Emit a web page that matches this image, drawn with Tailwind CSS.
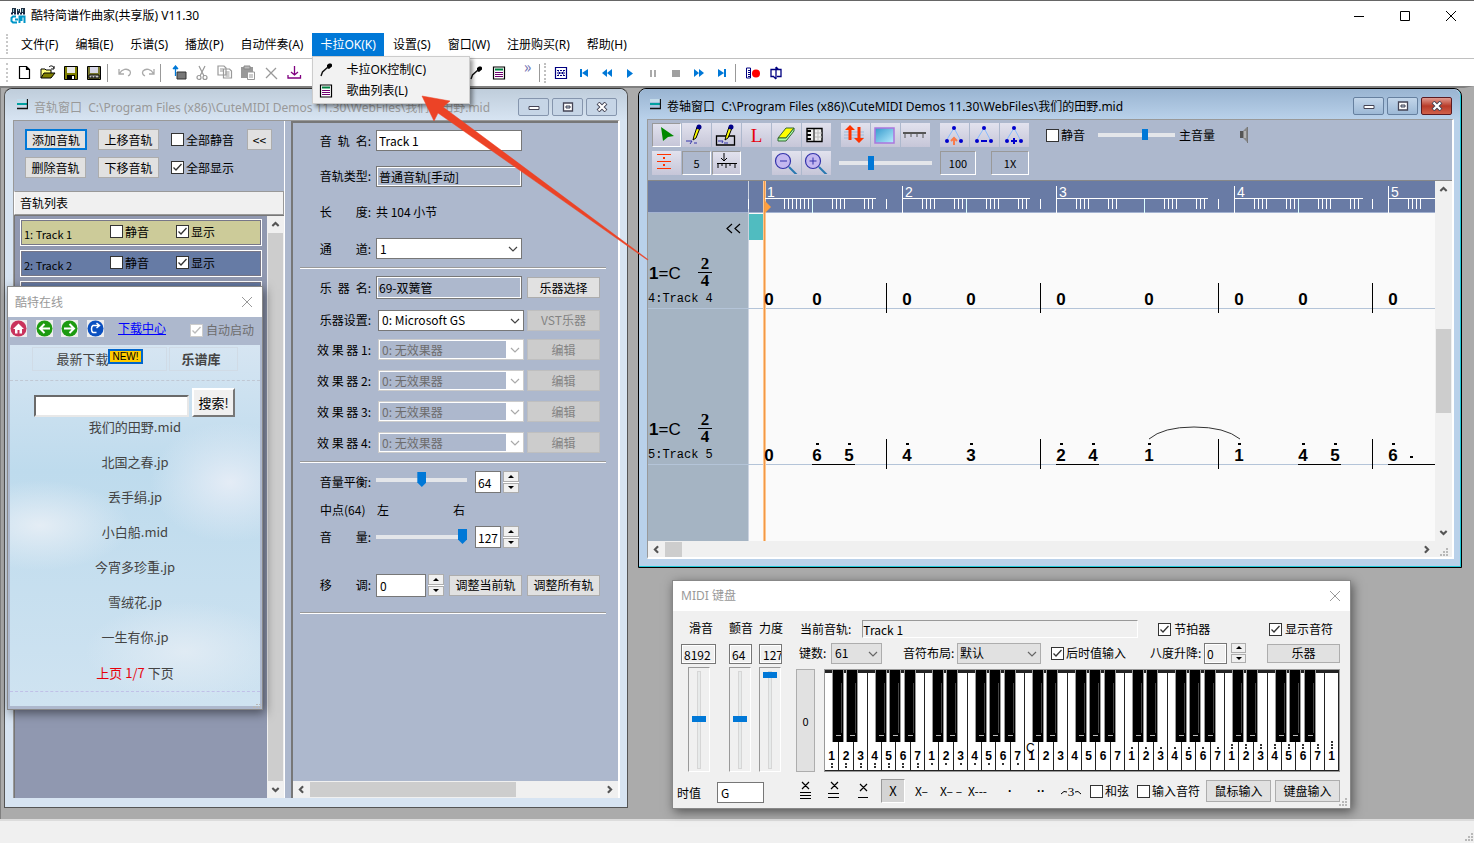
<!DOCTYPE html>
<html lang="zh-CN">
<head>
  <meta charset="UTF-8" />
  <title>酷特简谱作曲家(共享版) V11.30</title>
  <script src="https://cdn.jsdelivr.net/npm/@tailwindcss/browser@4"></script>
</head>
<body class="relative h-screen overflow-hidden flex flex-col bg-[#f0f0f0] text-black text-[12px] leading-4 font-['Noto_Sans_CJK_SC',sans-serif] select-none">

  <!-- Shared shapes -->
  <svg class="hidden">
    <symbol id="check" viewBox="0 0 13 13"><path d="M2.5 6.5 5 9l5.5-6" fill="none" stroke="currentColor" stroke-width="1.3" /></symbol>
    <symbol id="down" viewBox="0 0 10 10"><path d="m1 3 4 4 4-4" fill="none" stroke="currentColor" stroke-width="1.2" /></symbol>
    <symbol id="spin" viewBox="0 0 6 3"><path d="M0 3 3 0l3 3z" /></symbol>
    <symbol id="close" viewBox="0 0 12 12"><path d="m1 1 10 10M11 1 1 11" fill="none" stroke="currentColor" /></symbol>
    <symbol id="arrow" viewBox="0 0 8 8"><path d="m1 5.500 3-3 3 3" fill="none" stroke="#555" stroke-width="2" /></symbol>
    <symbol id="grip" viewBox="0 0 9 9"><path d="M6 0h2v2H6zM3 3h2v2H3zM6 3h2v2H6zM0 6h2v2H0zM3 6h2v2H3zM6 6h2v2H6z" fill="#b8b8b8" /></symbol>
    <symbol id="doc" viewBox="0 0 11 11"><path d="M0 0h10v3H0z" fill="#c4dcea" /><path d="M0 4h10v2H0z" fill="#00a0a0" /><path d="M0 9.500h10.500V0" fill="none" stroke="#111" stroke-width="1.3" /></symbol>
    <symbol id="mic" viewBox="0 0 14 14"><path d="M8 2 10 .5h2l1 1v2L10 6 8 5z" /><path d="M9 4 3.500 9 2 13" fill="none" stroke="#111" stroke-width="1.4" /></symbol>
    <symbol id="songs" viewBox="0 0 14 14"><path d="M1.500 1h11v12h-11z" fill="#fff" stroke="#000" stroke-width="1.2" /><path d="M3 2.500h8v2H3z" fill="#008040" /><path d="M3 6.500h8M3 8.500h8M3 10.500h8" stroke="#700070" /></symbol>
    <symbol id="min" viewBox="0 0 12 8"><path d="M1 3.500h10v3H1z" fill="#fff" stroke="#445" /></symbol>
    <symbol id="max" viewBox="0 0 12 10"><path d="M1.500 1h9v8h-9z" fill="#fff" stroke="#445" stroke-width="1.3" /><path d="M4 4h4v2H4z" fill="#bcd" stroke="#445" /></symbol>
    <symbol id="x" viewBox="0 0 12 10"><path d="m2 1 8 8M10 1 2 9" stroke="#445" stroke-width="4" /><path d="m2.500 1.500 7 7M9.500 1.500l-7 7" stroke="#fff" stroke-width="2.200" /></symbol>
  </svg>

  <!-- Title bar -->
  <header class="h-[30px] shrink-0 flex items-center bg-white border-t border-[#666] pl-[10px]">
    <svg class="w-4 h-4" viewBox="0 0 16 16"><path d="M2 0h4v5H2zM7 1h3v4H7zM11 0h4v5h-4z" fill="#234" /><path d="M3 1h1v3H3zM8 1h1v2H8zM12 1h1v3h-1z" fill="#9cd" /><path d="M1 5.500h14" stroke="#124" stroke-width="2" stroke-dasharray="2 1" /><path d="M6 8.500H3L1.500 10v3L3 14.500h4M5 11.500h3M9.500 15V8.500h2V13M12 8.500h2.500V15" fill="none" stroke="#0096c8" stroke-width="2" /></svg>
    <h1 class="ml-[5px] flex-1 font-['Noto_Sans','Noto_Sans_CJK_SC',sans-serif]">酷特简谱作曲家(共享版) V11.30</h1>
    <button aria-label="最小化" class="w-[46px] h-full grid place-items-center"><svg class="w-[10px] h-[10px]" viewBox="0 0 10 10"><path d="M0 5.500h10" stroke="#000" /></svg></button>
    <button aria-label="最大化" class="w-[46px] h-full grid place-items-center"><svg class="w-[10px] h-[10px]" viewBox="0 0 10 10"><path d="M.5.5h9v9h-9z" fill="none" stroke="#000" /></svg></button>
    <button aria-label="关闭" class="w-[46px] h-full grid place-items-center"><svg class="w-3 h-3"><use href="#close" /></svg></button>
  </header>

  <!-- Menu bar -->
  <nav class="relative h-[29px] shrink-0 flex gap-px items-center bg-white border-b border-[#c0c0c0] pt-[2px] pl-[13px] font-['Noto_Sans','Noto_Sans_CJK_SC',sans-serif] before:absolute before:left-[6px] before:inset-y-1 before:border-l-2 before:border-dotted before:border-[#c8c8c8]">
    <button class="h-6 px-2">文件(F)</button>
    <button class="h-6 px-2">编辑(E)</button>
    <button class="h-6 px-2">乐谱(S)</button>
    <button class="h-6 px-2">播放(P)</button>
    <button class="h-6 px-2">自动伴奏(A)</button>
    <div class="relative">
      <button class="h-6 px-2 bg-[#0078d7] text-white">卡拉OK(K)</button>
      <div class="absolute z-50 left-0 top-[23px] w-[158px] bg-[#f2f2f2] border border-[#ccc] shadow-[3px_3px_4px_rgba(0,0,0,0.4)] py-[2px]">
        <button class="w-full h-[21px] flex items-center gap-[13px] pl-[6px]"><svg class="w-[14px] h-[14px]"><use href="#mic" /></svg>卡拉OK控制(C)</button>
        <button class="w-full h-[21px] flex items-center gap-[13px] pl-[6px]"><svg class="w-[14px] h-[14px]"><use href="#songs" /></svg>歌曲列表(L)</button>
      </div>
    </div>
    <button class="h-6 px-2">设置(S)</button>
    <button class="h-6 px-2">窗口(W)</button>
    <button class="h-6 px-2">注册购买(R)</button>
    <button class="h-6 px-2">帮助(H)</button>
  </nav>

  <!-- Toolbar -->
  <div class="relative h-[27px] shrink-0 flex items-center bg-white pl-[13px] before:absolute before:left-[6px] before:inset-y-1 before:border-l-2 before:border-dotted before:border-[#c8c8c8] [&>button]:w-[23px] [&>button]:h-[22px] [&>button]:grid [&>button]:place-items-center [&>button]:shrink-0 [&>i]:w-px [&>i]:h-[18px] [&>i]:bg-[#999] [&>i]:shrink-0 [&_svg]:w-4 [&_svg]:h-4">
    <button aria-label="新建"><svg viewBox="0 0 16 16"><path d="M2.500 1.500h7l3 3v9h-10zM9.500 1.500v3h3" fill="#fff" stroke="#000" stroke-width="1.2" /></svg></button>
    <button aria-label="打开"><svg viewBox="0 0 16 16"><path d="M1 13V4h4l1 1h5v3" fill="#ffff80" stroke="#000" /><path d="m1 13 3-5h11l-4 5z" fill="#808000" stroke="#000" /><path d="M9 2c2-2 4-1 5 1m0-2v3h-3" fill="none" stroke="#000" /></svg></button>
    <button aria-label="保存"><svg viewBox="0 0 16 16"><path d="M1.500 1.500h13v13h-13z" fill="#808000" stroke="#000" /><path d="M4 2h8v6H4z" fill="#e8e8e8" /><path d="M4 10h8v4.500H4z" /><path d="M9 11h2v3H9z" fill="#fff" /></svg></button>
    <button aria-label="另存为"><svg viewBox="0 0 16 16"><path d="M1.500 1.500h13v13h-13z" fill="#777730" stroke="#000" /><path d="M4 2h8v6H4z" fill="#d8d8e8" /><path d="M3 10h10v3H3z" fill="#ccc" stroke="#000" /><path d="M5 12h2m1 0h2" stroke="#000" /></svg></button>
    <i class="mx-[2px]"></i><span class="w-[3px]"></span>
    <button aria-label="撤销"><svg viewBox="0 0 16 16"><path d="M2 4v5h5M2.500 8.500C5 4 10 3 13 6c1 2 0 4-2 5" fill="none" stroke="#aaa" stroke-width="1.3" /></svg></button>
    <button aria-label="重做"><svg viewBox="0 0 16 16"><path d="M14 4v5H9M13.500 8.500C11 4 6 3 3 6c-1 2 0 4 2 5" fill="none" stroke="#aaa" stroke-width="1.3" /></svg></button>
    <i class="mx-[1px]"></i><span class="w-[5px]"></span>
    <button aria-label="插入"><svg viewBox="0 0 16 16"><path d="M6 7h9v7H6z" fill="#777" stroke="#333" /><path d="M4.500 1v10M2 4l2.500-3L7 4M2 3.500h5" fill="none" stroke="#0078d7" stroke-width="1.3" /></svg></button>
    <button aria-label="剪切"><svg viewBox="0 0 16 16" fill="none" stroke="#999" stroke-width="1.2"><path d="m5 1 5 10M11 1 6 11" /><circle cx="5" cy="12.500" r="2" /><circle cx="11" cy="12.500" r="2" /></svg></button>
    <button aria-label="复制"><svg viewBox="0 0 16 16" fill="#fff" stroke="#999" stroke-width="1.2"><path d="M1 1h6l2 2v7H1zM6.500 4h6l2 2v7h-8z" /><path d="M3 4h3M3 6h3M8.500 7h4m-4 2h4m-4 2h4" /></svg></button>
    <button aria-label="粘贴"><svg viewBox="0 0 16 16"><path d="M1 2h12v11H1z" fill="#999" /><path d="M4 1h6v3H4z" fill="#bbb" stroke="#888" /><path d="M7.500 7h7v7.500h-7z" fill="#fff" stroke="#999" /><path d="M9 10h4m-4 2h4" stroke="#999" /></svg></button>
    <button aria-label="删除"><svg viewBox="0 0 16 16"><path d="m3 3 11 11M13 3 3 13" stroke="#999" stroke-width="1.300" /></svg></button>
    <button aria-label="导入"><svg viewBox="0 0 16 16"><path d="M8.500 1v9M5 7l3.500 3L12 7M2 10v3h12.500v-3" fill="none" stroke="#800080" stroke-width="1.300" /></svg></button>
    <span class="w-[159px] shrink-0"></span>
    <button aria-label="卡拉OK控制"><svg viewBox="0 0 16 16"><use href="#mic" x="1" y="1" width="14" height="14" /></svg></button>
    <button aria-label="歌曲列表"><svg viewBox="0 0 16 16"><use href="#songs" x="1" y="1" width="14" height="14" /></svg></button>
    <button aria-label="更多" class="self-start -mt-1 text-[#7070b0] text-[16px] ml-[6px]">»</button>
    <i></i>
    <span class="ml-1 mr-[3px] h-[20px] border-l-2 border-dotted border-[#c0c0c0]"></span>
    <button aria-label="卷轴"><svg viewBox="0 0 16 16"><path d="M2.500 2.500h11v11h-11z" fill="none" stroke="#000080" stroke-width="1.200" /><path d="M4 5.500h2m1 0h2m1 0h2M4 10.500h2m1 0h2m1 0h2M4 8h8M5.500 6.500 7 8 5.500 9.500m5-3L9 8l1.500 1.500" fill="none" stroke="#000080" /></svg></button>
    <button aria-label="到开头"><svg viewBox="0 0 16 16" fill="#0078d7"><path d="M4 4h2v8H4zM12 4v8L6 8z" /></svg></button>
    <button aria-label="快退"><svg viewBox="0 0 16 16" fill="#0078d7"><path d="M8 4v8L3 8zM13 4v8L8 8z" /></svg></button>
    <button aria-label="播放"><svg viewBox="0 0 16 16" fill="#0078d7"><path d="M5 4v9l6-4.500z" /></svg></button>
    <button aria-label="暂停"><svg viewBox="0 0 16 16" fill="#aaa"><path d="M5 5h2v7H5zM9 5h2v7H9z" /></svg></button>
    <button aria-label="停止"><svg viewBox="0 0 16 16" fill="#a0a0a0"><path d="M4 5h8v7H4z" /></svg></button>
    <button aria-label="快进"><svg viewBox="0 0 16 16" fill="#0078d7"><path d="M3 4v8l5-4zM8 4v8l5-4z" /></svg></button>
    <button aria-label="到结尾"><svg viewBox="0 0 16 16" fill="#0078d7"><path d="M10 4h2v8h-2zM4 4v8l6-4z" /></svg></button>
    <i class="mx-[2px]"></i><span class="w-[3px]"></span>
    <button aria-label="录音"><svg viewBox="0 0 16 16"><path d="M1.500 3h4v10h-4zM3 5.500h2m-2 2h2m-2 2h2m-2 2h2" fill="none" stroke="#000080" /><circle cx="11" cy="8.500" r="4" fill="red" /></svg></button>
    <button aria-label="循环"><svg viewBox="0 0 16 16"><path d="M6 11.500H3V4.500h10v7H9M8 2v12M8 2l2.500 2.500M8 14l-2.500-2.500" fill="none" stroke="#000080" stroke-width="1.300" /></svg></button>
  </div>

  <!-- Desktop -->
  <main class="relative flex-1 bg-[#ababab] border-t-2 border-[#808080] border-l border-r-[10px] border-r-[#ababab]">

    <!-- Track window -->
    <section class="absolute left-[3px] top-0 bottom-[11px] w-[624px] flex flex-col rounded-t-lg border border-[#555] border-t-[#333] bg-[#d7e4f2] pb-[9px] pl-[8px] pr-[7px]">
      <div class="h-[31px] -ml-[8px] -mr-[7px] pl-[9px] pr-[10px] shrink-0 flex items-center gap-[6px] rounded-t-lg bg-linear-to-b from-[#bfcddb] to-[#d7e4f2] text-[#999] font-['Noto_Sans','Noto_Sans_CJK_SC',sans-serif]">
        <svg class="ml-[3px] w-[11px] h-[11px]"><use href="#doc" /></svg>
        <h2 class="flex-1 pt-[6px] whitespace-pre">音轨窗口  C:\Program Files (x86)\CuteMIDI Demos 11.30\WebFiles\我们的田野.mid</h2>
        <div class="flex gap-[3px] pt-1">
          <button aria-label="最小化" class="w-[31px] h-[18px] grid place-items-center rounded-xs border border-[#8595ad] bg-[#c6d5e6]"><svg class="w-3 h-2"><use href="#min" /></svg></button>
          <button aria-label="最大化" class="w-[31px] h-[18px] grid place-items-center rounded-xs border border-[#8595ad] bg-[#c6d5e6]"><svg class="w-3 h-[10px]"><use href="#max" /></svg></button>
          <button aria-label="关闭" class="w-[31px] h-[18px] grid place-items-center rounded-xs border border-[#8595ad] bg-[#c6d5e6]"><svg class="w-3 h-[10px]"><use href="#x" /></svg></button>
        </div>
      </div>

      <div class="flex-1 min-h-0 flex bg-[#adb8cd] border-t border-l border-[#999] border-r-2 border-r-white">
        <!-- Track list -->
        <div class="w-[271px] mr-[6px] flex flex-col border-r border-white">
          <div class="h-[70px] shrink-0 pt-[8px] pl-[11px] grid grid-cols-[73px_73px_76px_25px] grid-rows-[21px_21px] gap-y-[7px]">
            <button class="w-[62px] bg-[#e1e1e1] border-2 border-[#0078d7]">添加音轨</button>
            <button class="w-[61px] bg-[#e1e1e1] border border-[#adadad]">上移音轨</button>
            <label class="flex items-center gap-[2px] whitespace-nowrap"><span class="relative w-[13px] h-[13px]"><input type="checkbox" class="peer block appearance-none w-[13px] h-[13px] border border-[#333] bg-white"><svg class="absolute inset-0 hidden peer-checked:block w-[13px] h-[13px] text-[#333]"><use href="#check" /></svg></span>全部静音</label>
            <button class="bg-[#e1e1e1] border border-[#adadad]">&lt;&lt;</button>
            <button class="w-[61px] bg-[#e1e1e1] border border-[#adadad]">删除音轨</button>
            <button class="w-[61px] bg-[#e1e1e1] border border-[#adadad]">下移音轨</button>
            <label class="flex items-center gap-[2px] whitespace-nowrap"><span class="relative w-[13px] h-[13px]"><input type="checkbox" checked class="peer block appearance-none w-[13px] h-[13px] border border-[#333] bg-white"><svg class="absolute inset-0 hidden peer-checked:block w-[13px] h-[13px] text-[#333]"><use href="#check" /></svg></span>全部显示</label>
          </div>
          <h3 class="h-[24px] shrink-0 pl-[5px] flex items-center bg-[#f0f0f0] border border-[#999] border-l-white">音轨列表</h3>
          <div class="flex-1 min-h-0 flex bg-[#9098b0] border-l border-t border-[#777]">
            <div id="tracks" class="flex-1 px-[5px] pt-[3px] flex flex-col gap-[4px] overflow-hidden"></div>
            <div class="w-[17px] flex flex-col items-center justify-between bg-[#cdcdcd] border-x border-x-[#f0f0f0]">
              <svg class="w-[15px] h-[17px] bg-[#f0f0f0]" viewBox="-3 -4 14 16"><use href="#arrow" width="8" height="8" /></svg>
              <svg class="w-[15px] h-[17px] bg-[#f0f0f0] rotate-180" viewBox="-3 -4 14 16"><use href="#arrow" width="8" height="8" /></svg>
            </div>
          </div>
        </div>

        <!-- Track properties -->
        <div class="flex-1 flex flex-col border-l-2 border-t-2 border-[#777]">
          <form class="flex-1 pl-[7px] pr-[12px] [&_label]:w-[56px] [&_label]:shrink-0 [&_label]:ml-[15px] [&_label]:mr-[5px] [&_label]:text-right [&_label]:whitespace-pre">
            <div class="h-[35px] flex items-center"><label for="tname">音&ensp;轨&ensp;名:</label><input id="tname" value="Track 1" class="w-[146px] h-[21px] px-[2px] bg-white border border-[#777]"></div>
            <div class="h-[36px] flex items-center"><label for="ttype">音轨类型:</label><input id="ttype" readonly value="普通音轨[手动]" class="w-[146px] h-[21px] px-[2px] border border-[#777] shadow-[inset_0_0_0_1px_#fff]"></div>
            <div class="h-[36px] flex items-center"><label for="tlen">长&emsp;&emsp;度:</label><output id="tlen">共 104 小节</output></div>
            <div class="h-[37px] flex items-center"><label for="tch">通&emsp;&emsp;道:</label>
              <span class="relative"><select id="tch" class="block appearance-none w-[146px] h-[21px] px-[3px] bg-white border border-[#777]"><option>1</option></select><svg class="absolute right-1 top-[6px] w-[10px] h-[10px] text-[#444]"><use href="#down" /></svg></span></div>
            <hr class="border-t border-b border-t-[#999] border-b-white">
            <div class="h-[37px] flex items-center"><label for="inst">乐&ensp;器&ensp;名:</label><input id="inst" readonly value="69-双簧管" class="w-[146px] h-[23px] px-[2px] border border-[#777] shadow-[inset_0_0_0_1px_#fff]"><button type="button" class="ml-[5px] w-[73px] h-[21px] bg-[#e1e1e1] border border-[#adadad]">乐器选择</button></div>
            <div class="h-[28px] flex items-center"><label for="dev">乐器设置:</label>
              <span class="relative ml-[2px]"><select id="dev" class="block appearance-none w-[146px] h-[21px] px-[3px] bg-white border border-[#777]"><option>0: Microsoft GS</option></select><svg class="absolute right-1 top-[6px] w-[10px] h-[10px] text-[#444]"><use href="#down" /></svg></span><button type="button" disabled class="ml-[3px] w-[73px] h-[21px] bg-[#ccc] border border-[#bfbfbf] text-[#838383]">VST乐器</button></div>
            <div id="effects"></div>
            <hr class="mt-[3px] border-t border-b border-t-[#999] border-b-white">
            <div class="h-[38px] flex items-center"><label for="pan">音量平衡:</label>
              <input id="pan" type="range" min="0" max="127" value="64" class="appearance-none w-[91px] h-4 mb-1 bg-transparent [&::-webkit-slider-runnable-track]:h-[4px] [&::-webkit-slider-runnable-track]:bg-[#e4e6ea] [&::-webkit-slider-thumb]:appearance-none [&::-webkit-slider-thumb]:w-[9px] [&::-webkit-slider-thumb]:h-[15px] [&::-webkit-slider-thumb]:-mt-[6px] [&::-webkit-slider-thumb]:bg-[#0078d7] [&::-webkit-slider-thumb]:[clip-path:polygon(0_0,100%_0,100%_70%,50%_100%,0_70%)]">
              <input aria-label="音量平衡值" value="64" class="ml-[8px] w-[26px] h-[22px] px-[2px] bg-white border border-[#777]">
              <span class="ml-[2px] w-[16px] h-[22px] flex flex-col gap-px bg-white"><button type="button" aria-label="加" class="flex-1 grid place-items-center border border-[#adadad] bg-[#f0f0f0]"><svg class="w-[6px] h-[3px]"><use href="#spin" /></svg></button><button type="button" aria-label="减" class="flex-1 grid place-items-center border border-[#adadad] bg-[#f0f0f0]"><svg class="w-[6px] h-[3px] rotate-180"><use href="#spin" /></svg></button></span></div>
            <div class="h-[18px] flex items-center pl-[20px]"><span class="w-[57px]">中点(64)</span><span class="w-[76px]">左</span><span>右</span></div>
            <div class="h-[36px] flex items-center"><label for="vol">音&emsp;&emsp;量:</label>
              <input id="vol" type="range" min="0" max="127" value="127" class="appearance-none w-[91px] h-4 bg-transparent [&::-webkit-slider-runnable-track]:h-[4px] [&::-webkit-slider-runnable-track]:bg-[#e4e6ea] [&::-webkit-slider-thumb]:appearance-none [&::-webkit-slider-thumb]:w-[9px] [&::-webkit-slider-thumb]:h-[15px] [&::-webkit-slider-thumb]:-mt-[6px] [&::-webkit-slider-thumb]:bg-[#0078d7] [&::-webkit-slider-thumb]:[clip-path:polygon(0_0,100%_0,100%_70%,50%_100%,0_70%)]">
              <input aria-label="音量值" value="127" class="ml-[8px] w-[26px] h-[22px] px-[2px] bg-white border border-[#777]">
              <span class="ml-[2px] w-[16px] h-[22px] flex flex-col gap-px bg-white"><button type="button" aria-label="加" class="flex-1 grid place-items-center border border-[#adadad] bg-[#f0f0f0]"><svg class="w-[6px] h-[3px]"><use href="#spin" /></svg></button><button type="button" aria-label="减" class="flex-1 grid place-items-center border border-[#adadad] bg-[#f0f0f0]"><svg class="w-[6px] h-[3px] rotate-180"><use href="#spin" /></svg></button></span></div>
            <div class="mt-[11px] h-[38px] flex items-center"><label for="shift">移&emsp;&emsp;调:</label>
              <input id="shift" value="0" class="w-[50px] h-[23px] px-[3px] bg-white border border-[#777]">
              <span class="ml-[2px] w-[16px] h-[22px] flex flex-col gap-px bg-white"><button type="button" aria-label="加" class="flex-1 grid place-items-center border border-[#adadad] bg-[#f0f0f0]"><svg class="w-[6px] h-[3px]"><use href="#spin" /></svg></button><button type="button" aria-label="减" class="flex-1 grid place-items-center border border-[#adadad] bg-[#f0f0f0]"><svg class="w-[6px] h-[3px] rotate-180"><use href="#spin" /></svg></button></span>
              <button type="button" class="ml-[5px] w-[73px] h-[21px] bg-[#e1e1e1] border border-[#adadad]">调整当前轨</button>
              <button type="button" class="ml-[5px] w-[73px] h-[21px] bg-[#e1e1e1] border border-[#adadad]">调整所有轨</button></div>
            <hr class="mt-[8px] border-t border-b border-t-[#999] border-b-white">
          </form>
          <div class="h-[17px] flex items-center bg-[#f0f0f0]">
            <svg class="w-[17px] h-[17px] -rotate-90" viewBox="-4 -4 16 16"><use href="#arrow" width="8" height="8" /></svg>
            <div class="w-[206px] h-[15px] bg-[#cdcdcd]"></div>
            <svg class="ml-auto w-[17px] h-[17px] rotate-90" viewBox="-4 -4 16 16"><use href="#arrow" width="8" height="8" /></svg>
          </div>
        </div>
      </div>
    </section>

    <!-- Score window -->
    <section class="absolute left-[637px] right-[2px] top-0 h-[480px] flex flex-col rounded-t-lg border border-black shadow-[inset_-1px_-1px_0_#20c8d8] bg-[#b9d1ea] pb-[8px] pl-[8px] pr-[7px]">
      <div class="h-[30px] -ml-[8px] -mr-[6px] pl-[9px] pr-[8px] shrink-0 flex items-center gap-[6px] rounded-t-lg bg-linear-to-b from-[#99b4d1] to-[#b9d1ea] font-['Noto_Sans','Noto_Sans_CJK_SC',sans-serif]">
        <svg class="ml-[2px] w-[11px] h-[11px]"><use href="#doc" /></svg>
        <h2 class="flex-1 pt-[6px] whitespace-pre">卷轴窗口  C:\Program Files (x86)\CuteMIDI Demos 11.30\WebFiles\我们的田野.mid</h2>
        <div class="flex gap-[3px] pt-1">
          <button aria-label="最小化" class="w-[31px] h-[18px] grid place-items-center rounded-xs border border-[#66809f] bg-linear-to-b from-[#c3d6ea] to-[#9db9d6]"><svg class="w-3 h-2"><use href="#min" /></svg></button>
          <button aria-label="最大化" class="w-[31px] h-[18px] grid place-items-center rounded-xs border border-[#66809f] bg-linear-to-b from-[#c3d6ea] to-[#9db9d6]"><svg class="w-3 h-[10px]"><use href="#max" /></svg></button>
          <button aria-label="关闭" class="w-[31px] h-[18px] grid place-items-center rounded-xs border border-[#5b1a20] bg-linear-to-b from-[#e09a90] via-[#b83a28] to-[#d0604a]"><svg class="w-3 h-[10px]"><use href="#x" /></svg></button>
        </div>
      </div>

      <div class="flex-1 min-h-0 flex flex-col border border-[#999] border-r-2 border-b-2 border-r-white border-b-white bg-[#f0f0f0]">
        <!-- Tools -->
        <div class="h-[61px] shrink-0 pt-[3px] pl-[4px] flex flex-col gap-[4px] bg-[#adb8cd] border-b border-[#888] [&_svg]:w-[28px] [&_svg]:h-[22px] [&_svg]:shrink-0">
          <div class="h-[24px] flex items-center [&>button]:w-[29px] [&>button]:h-[24px] [&>button]:mr-px [&>button]:bg-linear-to-b [&>button]:from-[#e2e2ee] [&>button]:to-[#c6c6d8] [&>button]:shrink-0">
            <button aria-label="选择" class="border border-t-[#999] border-l-[#999] border-r-white border-b-white"><svg viewBox="0 0 28 22"><path d="m8 3 13 9-6 1-5 4z" fill="#080" /></svg></button>
            <button aria-label="铅笔"><svg viewBox="0 0 28 22"><path d="m15 3-3 9-1 4 3-2 4-10z" fill="#ff0" stroke="#000" /><circle cx="17" cy="3" r="2.500" fill="#008" /><path d="M4 17h6l-2 3M12 19h3" fill="none" stroke="#33a" /></svg></button>
            <button aria-label="框写"><svg viewBox="0 0 28 22"><path d="M4.500 12h18v9h-18z" fill="none" stroke="#000" stroke-width="1.300" /><path d="m17 3-3 9-1 4 3-2 4-10z" fill="#ff0" stroke="#000" /><circle cx="19" cy="3" r="2.500" fill="#008" /><path d="M6 17h5l-1 2M12 19h4" fill="none" stroke="#33a" /></svg></button>
            <button aria-label="歌词" class="text-[19px] leading-none text-red-600 font-['Liberation_Serif',serif]">L</button>
            <button aria-label="橡皮"><svg viewBox="0 0 28 22"><path d="m6 14 8-10h8l-8 10z" fill="#ff0" stroke="#363" /><path d="M6 14v3h8l8-10V4l-8 10z" fill="#afa" stroke="#363" /></svg></button>
            <button aria-label="键盘"><svg viewBox="0 0 28 22"><path d="M5 4.500h15v13H5z" fill="#eee" stroke="#000" stroke-width="1.400" /><path d="M12 4v14" stroke="#000" /><path d="M5 6h4v2H5zM5 10h4v2H5zM5 14h4v2H5z" /><path d="M13 9h7m-7 4h7M16 5v12" stroke="#bbb" /></svg></button>
            <span class="w-[9px]"></span>
            <button aria-label="力度"><svg viewBox="0 0 28 22"><path d="M3 8h20M3 11h20M3 14h20" stroke="#9bd" /><path d="M9 16V5m9-2v12" stroke="#f30" stroke-width="3" /><path d="m4 6 5-5 5 5zM13 14l5 5 5-5z" fill="#f30" /></svg></button>
            <button aria-label="背景"><svg viewBox="0 0 28 22"><defs><linearGradient id="sky" x2="1" y2="1"><stop stop-color="#39c" /><stop offset="1" stop-color="#bef" /></linearGradient></defs><path d="M4 4h19v15H4z" fill="url(#sky)" stroke="#a7d" stroke-width="1.500" /></svg></button>
            <button aria-label="标尺"><svg viewBox="0 0 28 22"><path d="M2 9h23" stroke="#555" stroke-width="2" /><path d="M4 10v4m6-4v3m6-3v3m6-3v4" stroke="#555" /></svg></button>
            <span class="w-[9px]"></span>
            <button aria-label="上移"><svg viewBox="0 0 28 22"><path d="m14 4-8 13M14 4l7 13" stroke="#8bf" /><g fill="#00c"><circle cx="14" cy="4" r="2" /><circle cx="7" cy="17" r="2" /><circle cx="21" cy="17" r="2" /></g><path d="M14 21v-6m-3 2 3-3 3 3" fill="none" stroke="#f97b4b" stroke-width="2" /></svg></button>
            <button aria-label="缩短"><svg viewBox="0 0 28 22"><path d="m14 4-8 13M14 4l7 13" stroke="#8bf" /><g fill="#00c"><circle cx="14" cy="4" r="2" /><circle cx="7" cy="17" r="2" /><circle cx="21" cy="17" r="2" /></g><path d="M11 17h6" stroke="#00c" stroke-width="2" /></svg></button>
            <button aria-label="加长"><svg viewBox="0 0 28 22"><path d="m14 4-8 13M14 4l7 13" stroke="#8bf" /><g fill="#00c"><circle cx="14" cy="4" r="2" /><circle cx="7" cy="17" r="2" /><circle cx="21" cy="17" r="2" /></g><path d="M11 17h6m-3-3v6" stroke="#00c" stroke-width="2" /></svg></button>
            <label class="ml-[16px] flex items-center gap-[2px]"><span class="relative w-[13px] h-[13px]"><input type="checkbox" class="block appearance-none w-[13px] h-[13px] border border-[#333] bg-white"></span>静音</label>
            <input id="master" type="range" value="62" class="ml-[13px] appearance-none w-[77px] h-4 bg-transparent [&::-webkit-slider-runnable-track]:h-[4px] [&::-webkit-slider-runnable-track]:bg-[#e4e6ea] [&::-webkit-slider-thumb]:appearance-none [&::-webkit-slider-thumb]:w-[6px] [&::-webkit-slider-thumb]:h-[11px] [&::-webkit-slider-thumb]:-mt-[4px] [&::-webkit-slider-thumb]:bg-[#0078d7]">
            <label for="master" class="ml-[4px]">主音量</label>
            <svg class="ml-[17px]" viewBox="0 0 28 22"><path d="M8 7h4v7H8z" fill="#555" /><path d="m11 7 4-4v15l-4-4z" fill="#888" /><path d="M15.500 3v16" stroke="#777" /><path d="M13 7v7" stroke="#ddd" /></svg>
          </div>
          <div class="h-[24px] flex items-center [&>button]:w-[29px] [&>button]:h-[24px] [&>button]:mr-px [&>button]:bg-linear-to-b [&>button]:from-[#e2e2ee] [&>button]:to-[#c6c6d8] [&>button]:shrink-0">
            <button aria-label="行距"><svg viewBox="0 0 28 22"><path d="M5 2.500h14M5 9.500h14M5 16.500h14" stroke="#f30" /><path d="M11 5h2v2h-2zM11 12h2v2h-2z" fill="#f30" /></svg></button>
            <output class="w-[29px] h-[24px] mr-px grid place-items-center border border-[#999] border-r-white border-b-white text-[11px]">5</output>
            <button aria-label="吸附" class="border border-t-[#999] border-l-[#999] border-r-white border-b-white"><svg viewBox="0 0 28 22"><path d="M11 1v8M8 6l3 3 3-3M4 11.500h20M5 12v4m4-4v2m4-2v4m4-4v2m5-2v4" fill="none" stroke="#000" /></svg></button>
            <span class="w-[30px]"></span>
            <button aria-label="缩小"><svg viewBox="0 0 28 22"><path d="m17 15 8 8" stroke="#2878b0" stroke-width="2" /><circle cx="11" cy="9" r="7.500" fill="#c4b8f0" stroke="#33a" stroke-width="1.200" /><path d="M8 9h7" stroke="#33a" /></svg></button>
            <button aria-label="放大"><svg viewBox="0 0 28 22"><path d="m17 15 8 8" stroke="#2878b0" stroke-width="2" /><circle cx="11" cy="9" r="7.500" fill="#c4b8f0" stroke="#33a" stroke-width="1.200" /><path d="M7.500 9h7M11 5.500v7" stroke="#33a" /></svg></button>
            <input aria-label="缩放" type="range" value="33" class="ml-[7px] appearance-none w-[93px] h-4 bg-transparent [&::-webkit-slider-runnable-track]:h-[4px] [&::-webkit-slider-runnable-track]:bg-[#e4e6ea] [&::-webkit-slider-thumb]:appearance-none [&::-webkit-slider-thumb]:w-[6px] [&::-webkit-slider-thumb]:h-[14px] [&::-webkit-slider-thumb]:-mt-[5px] [&::-webkit-slider-thumb]:bg-[#0078d7]">
            <output class="ml-[8px] w-[36px] h-[24px] grid place-items-center border border-[#999] border-r-white border-b-white text-[11px]">100</output>
            <output class="ml-[15px] w-[38px] h-[24px] grid place-items-center border border-[#999] border-r-white border-b-white text-[11px]">1X</output>
          </div>
        </div>

        <div class="flex-1 min-h-0 flex">
          <svg id="score" class="flex-1 h-full bg-[#fafafa]"></svg>
          <div class="w-[17px] flex flex-col items-center">
            <svg class="w-[15px] h-[17px]" viewBox="-3 -4 14 16"><use href="#arrow" width="8" height="8" /></svg>
            <div class="mt-[131px] w-[15px] h-[84px] bg-[#cdcdcd]"></div>
            <svg class="mt-auto w-[15px] h-[17px] rotate-180" viewBox="-3 -4 14 16"><use href="#arrow" width="8" height="8" /></svg>
          </div>
        </div>
        <div class="h-[16px] shrink-0 flex items-center">
          <svg class="w-[17px] h-[17px] -rotate-90" viewBox="-4 -4 16 16"><use href="#arrow" width="8" height="8" /></svg>
          <div class="w-[17px] h-[15px] bg-[#cdcdcd]"></div>
          <svg class="ml-auto w-[17px] h-[17px] rotate-90" viewBox="-4 -4 16 16"><use href="#arrow" width="8" height="8" /></svg>
          <svg class="ml-[5px] mr-[3px] self-end w-[9px] h-[9px]"><use href="#grip" /></svg>
        </div>
      </div>
    </section>

    <!-- Online window -->
    <section class="absolute z-10 left-[6px] top-[198px] w-[256px] h-[424px] flex flex-col border border-[#888] bg-[#adb8cd] shadow-[2px_3px_10px_rgba(0,0,0,0.5)]">
      <div class="h-[30px] shrink-0 flex items-center justify-between bg-white pl-[7px] pr-[9px] text-[#999]">
        <h2>酷特在线</h2><button aria-label="关闭"><svg class="w-3 h-3"><use href="#close" /></svg></button>
      </div>
      <div class="h-[28px] shrink-0 flex items-start pt-[3px] pl-[2px]">
        <button aria-label="主页" class="w-[17px] h-[17px] bg-[#eee]"><svg viewBox="0 0 17 17"><circle cx="8.500" cy="8.500" r="8" fill="#c9335c" /><path d="M3 9 8.500 3.500 14 9h-2v4.500H9.500V10h-2v3.500H5V9z" fill="#fff" /></svg></button>
        <button aria-label="后退" class="ml-[9px] w-[17px] h-[17px] bg-[#eee]"><svg viewBox="0 0 17 17"><circle cx="8.500" cy="8.500" r="8" fill="#1c9a10" /><path d="M14 8.500H4M8.500 4 4 8.500 8.500 13" fill="none" stroke="#fff" stroke-width="2" /></svg></button>
        <button aria-label="前进" class="ml-[8px] w-[17px] h-[17px] bg-[#eee]"><svg viewBox="0 0 17 17"><circle cx="8.500" cy="8.500" r="8" fill="#1c9a10" /><path d="M3 8.500h10M8.500 4 13 8.500 8.500 13" fill="none" stroke="#fff" stroke-width="2" /></svg></button>
        <button aria-label="刷新" class="ml-[9px] w-[17px] h-[17px] bg-[#eee]"><svg viewBox="0 0 17 17"><circle cx="8.500" cy="8.500" r="8" fill="#0a4fc0" /><path d="M9.500 12.500H6c-2-1-2-6 0-7h6.500M9.500 3l3 2.500-3 2.500" fill="none" stroke="#fff" stroke-width="1.500" /></svg></button>
        <a href="#" class="ml-[14px] text-[#00f] underline">下载中心</a>
        <label class="ml-[24px] mt-[2px] flex items-center gap-[3px] text-[#6d6d6d]"><span class="relative w-[13px] h-[13px]"><input type="checkbox" checked disabled class="peer block appearance-none w-[13px] h-[13px] border border-[#ccc] bg-white"><svg class="absolute inset-0 w-[13px] h-[13px] text-[#bbb]"><use href="#check" /></svg></span>自动启动</label>
      </div>
      <div class="flex-1 mx-[2px] mb-[3px] flex flex-col text-center text-[13px] text-[#444] bg-[#cfe2f0] bg-[radial-gradient(ellipse_90px_45px_at_12%_50%,#e4edf5,transparent),radial-gradient(ellipse_80px_60px_at_88%_38%,#e4ecf6,transparent),radial-gradient(ellipse_100px_50px_at_70%_85%,#e0ebf4,transparent),linear-gradient(#d6e5f2,#bedbed_35%,#cfe3f1)]">
        <div class="h-[36px] pt-[2px] border-b border-dashed border-[#c0c8d4] flex pl-[22px] gap-[2px]">
          <a href="#" class="w-[135px] h-[24px] flex items-center justify-center border border-[#d0dbe6]">最新下载<span class="mb-[5px] px-[2px] h-[15px] border-2 border-[#06c] bg-[#fc0] text-black text-[10px] leading-[11px] font-['Liberation_Sans',sans-serif]">NEW!</span></a>
          <a href="#" class="w-[69px] h-[24px] flex items-center justify-center border border-[#d0dbe6] font-bold pr-[5px]">乐谱库</a>
        </div>
        <div class="h-[36px] pl-[24px] flex gap-[3px] items-end">
          <input aria-label="搜索内容" class="w-[155px] h-[22px] bg-white border-2 border-[#6a6a6a] border-r-[#e8e8e8] border-b-[#e8e8e8]">
          <button class="w-[43px] h-[29px] bg-[#f0f0f0] border-2 border-white border-r-[#777] border-b-[#777] text-black">搜索!</button>
        </div>
        <ul class="-mt-2 [&>li]:h-[35px] [&>li]:flex [&>li]:items-center [&>li]:justify-center">
          <li><a href="#">我们的田野.mid</a></li>
          <li><a href="#">北国之春.jp</a></li>
          <li><a href="#">丢手绢.jp</a></li>
          <li><a href="#">小白船.mid</a></li>
          <li><a href="#">今宵多珍重.jp</a></li>
          <li><a href="#">雪绒花.jp</a></li>
          <li><a href="#">一生有你.jp</a></li>
        </ul>
        <p class="h-[38px] leading-[38px] border-b border-dashed border-[#c0c0e8]"><span class="text-red-600">上页 1/7</span> <a href="#">下页</a></p>
      </div>
      <svg class="absolute right-0 bottom-0 w-[9px] h-[5px]"><use href="#grip" width="9" height="9" y="-4" /></svg>
    </section>

    <!-- MIDI keyboard window -->
    <section class="absolute z-10 left-[671px] top-[492px] w-[679px] flex flex-col border border-[#888] bg-[#f0f0f0] shadow-[2px_3px_10px_rgba(0,0,0,0.5)]">
      <div class="h-[30px] flex items-center justify-between bg-white pl-[8px] pr-[9px] text-[#999] font-['Noto_Sans','Noto_Sans_CJK_SC',sans-serif]">
        <h2>MIDI 键盘</h2><button aria-label="关闭"><svg class="w-3 h-3"><use href="#close" /></svg></button>
      </div>
      <div class="flex h-[197px] pl-[4px] pr-[10px]">
        <!-- Wheels -->
        <div class="w-[119px] shrink-0 flex flex-col">
          <div class="flex pl-[4px]">
            <div class="w-[35px] mr-[9px] flex flex-col items-center gap-[3px]">
              <label for="bend" class="h-[30px] pt-[9px] whitespace-nowrap pl-[5px]">滑音</label>
              <input aria-label="滑音值" value="8192" class="w-[35px] h-[20px] px-[2px] border border-[#777] shadow-[inset_0_0_0_1px_#fff]">
              <span class="w-[22px] h-[105px] grid place-items-center border border-[#999] border-r-white border-b-white"><input id="bend" type="range" value="51" class="appearance-none [writing-mode:vertical-lr] [direction:rtl] w-[14px] h-[98px] bg-transparent [&::-webkit-slider-runnable-track]:w-[4px] [&::-webkit-slider-runnable-track]:bg-[#e7eaea] [&::-webkit-slider-runnable-track]:border [&::-webkit-slider-runnable-track]:border-[#d6d6d6] [&::-webkit-slider-thumb]:appearance-none [&::-webkit-slider-thumb]:w-[14px] [&::-webkit-slider-thumb]:h-[6px] [&::-webkit-slider-thumb]:-ml-[6px] [&::-webkit-slider-thumb]:bg-[#0078d7]"></span>
            </div>
            <div class="w-[30px] pl-[4px] flex flex-col items-start gap-[3px]">
              <label for="mod" class="h-[30px] pt-[9px] whitespace-nowrap">颤音</label>
              <input aria-label="颤音值" value="64" class="w-[23px] h-[20px] px-[2px] border border-[#777] shadow-[inset_0_0_0_1px_#fff]">
              <span class="w-[22px] h-[105px] grid place-items-center border border-[#999] border-r-white border-b-white"><input id="mod" type="range" value="51" class="appearance-none [writing-mode:vertical-lr] [direction:rtl] w-[14px] h-[98px] bg-transparent [&::-webkit-slider-runnable-track]:w-[4px] [&::-webkit-slider-runnable-track]:bg-[#e7eaea] [&::-webkit-slider-runnable-track]:border [&::-webkit-slider-runnable-track]:border-[#d6d6d6] [&::-webkit-slider-thumb]:appearance-none [&::-webkit-slider-thumb]:w-[14px] [&::-webkit-slider-thumb]:h-[6px] [&::-webkit-slider-thumb]:-ml-[6px] [&::-webkit-slider-thumb]:bg-[#0078d7]"></span>
            </div>
            <div class="w-[30px] pl-[4px] flex flex-col items-start gap-[3px]">
              <label for="vel" class="h-[30px] pt-[9px] whitespace-nowrap">力度</label>
              <input aria-label="力度值" value="127" class="w-[23px] h-[20px] pl-[3px] border border-[#777] shadow-[inset_0_0_0_1px_#fff]">
              <span class="w-[22px] h-[105px] grid place-items-center border border-[#999] border-r-white border-b-white"><input id="vel" type="range" value="100" class="appearance-none [writing-mode:vertical-lr] [direction:rtl] w-[14px] h-[98px] bg-transparent [&::-webkit-slider-runnable-track]:w-[4px] [&::-webkit-slider-runnable-track]:bg-[#e7eaea] [&::-webkit-slider-runnable-track]:border [&::-webkit-slider-runnable-track]:border-[#d6d6d6] [&::-webkit-slider-thumb]:appearance-none [&::-webkit-slider-thumb]:w-[14px] [&::-webkit-slider-thumb]:h-[6px] [&::-webkit-slider-thumb]:-ml-[6px] [&::-webkit-slider-thumb]:bg-[#0078d7]"></span>
            </div>
          </div>
          <div class="mt-[10px] flex items-center gap-[16px]"><label for="dur">时值</label><input id="dur" value="G" class="w-[47px] h-[21px] px-[3px] bg-white border border-[#777]"></div>
        </div>

        <div class="flex-1 flex flex-col">
          <div class="h-[30px] pt-[6px] pl-[4px] flex items-center">
            <label for="cur">当前音轨:</label>
            <input id="cur" readonly value="Track 1" class="ml-[11px] w-[276px] h-[18px] border border-[#999] border-r-white border-b-white">
            <label class="ml-[20px] flex items-center gap-[3px]"><span class="relative w-[13px] h-[13px]"><input type="checkbox" checked class="peer block appearance-none w-[13px] h-[13px] border border-[#333] bg-white"><svg class="absolute inset-0 hidden peer-checked:block w-[13px] h-[13px] text-[#333]"><use href="#check" /></svg></span>节拍器</label>
            <label class="ml-auto mr-[7px] flex items-center gap-[3px]"><span class="relative w-[13px] h-[13px]"><input type="checkbox" checked class="peer block appearance-none w-[13px] h-[13px] border border-[#333] bg-white"><svg class="absolute inset-0 hidden peer-checked:block w-[13px] h-[13px] text-[#333]"><use href="#check" /></svg></span>显示音符</label>
          </div>
          <div class="h-[24px] pl-[3px] flex items-center">
            <label for="keys" class="w-[32px] whitespace-nowrap">键数:</label>
            <span class="relative"><select id="keys" class="block appearance-none w-[51px] h-[21px] px-[3px] bg-[#e1e1e1] border border-[#adadad]"><option>61</option></select><svg class="absolute right-1 top-[6px] w-[10px] h-[10px] text-[#666]"><use href="#down" /></svg></span>
            <label for="lay" class="ml-[21px] w-[54px] whitespace-nowrap">音符布局:</label>
            <span class="relative"><select id="lay" class="block appearance-none w-[84px] h-[21px] px-[2px] bg-[#e1e1e1] border border-[#adadad]"><option>默认</option></select><svg class="absolute right-1 top-[6px] w-[10px] h-[10px] text-[#666]"><use href="#down" /></svg></span>
            <label class="ml-[10px] flex items-center gap-[2px]"><span class="relative w-[13px] h-[13px]"><input type="checkbox" checked class="peer block appearance-none w-[13px] h-[13px] border border-[#333] bg-white"><svg class="absolute inset-0 hidden peer-checked:block w-[13px] h-[13px] text-[#333]"><use href="#check" /></svg></span>后时值输入</label>
            <label for="oct" class="ml-[24px] w-[54px] whitespace-nowrap">八度升降:</label>
            <input id="oct" value="0" class="w-[23px] h-[21px] px-[2px] border border-[#777] shadow-[inset_0_0_0_1px_#fff]">
            <span class="ml-[4px] w-[15px] h-[20px] flex flex-col gap-px"><button aria-label="加" class="flex-1 grid place-items-center border border-[#adadad]"><svg class="w-[6px] h-[3px]"><use href="#spin" /></svg></button><button aria-label="减" class="flex-1 grid place-items-center border border-[#adadad]"><svg class="w-[6px] h-[3px] rotate-180"><use href="#spin" /></svg></button></span>
            <button class="ml-auto w-[73px] h-[19px] bg-[#e1e1e1] border border-[#adadad] leading-none">乐器</button>
          </div>
          <div class="mt-[4px] h-[103px] flex gap-[9px]">
            <button class="w-[19px] bg-[#e1e1e1] border border-[#adadad] text-[11px]">0</button>
            <svg id="piano" class="flex-1 h-full"></svg>
          </div>
          <div class="h-[36px] flex items-center pt-[2px]">
            <svg class="w-[84px] h-[25px] mr-px shrink-0" viewBox="0 0 84 25" stroke="#000" fill="none" stroke-width="1.200"><path d="m6 3 7 7m0-7-7 7M4 13.500h11M4 16.500h11M4 19.500h11M35 3l7 7m0-7-7 7M32 14.500h11M32 18.500h11M64 5l7 7m0-7-7 7M62 18.500h10" /></svg>
            <button class="w-[24px] h-[24px] bg-[#d4d4d4] border border-[#999] border-r-white border-b-white text-[13px]">X</button>
            <button class="ml-[10px] w-[16px] text-left">X–</button>
            <button class="ml-[9px] w-[22px] text-left whitespace-nowrap">X– –</button>
            <button class="ml-[6px] w-[26px] text-left whitespace-nowrap">X---</button>
            <button class="ml-[13px] w-[6px] font-bold font-['Liberation_Sans',sans-serif]">·</button>
            <button class="ml-[22px] w-[12px] font-bold font-['Liberation_Sans',sans-serif]">··</button>
            <button aria-label="三连音" class="ml-[13px]"><svg class="w-[22px] h-[18px]" viewBox="0 0 22 18"><path d="M1 12q3-4 6-2M21 12q-3-4-6-2" fill="none" stroke="#000" /><text x="11" y="14" text-anchor="middle" font-family="Liberation Serif, serif" font-size="13">3</text></svg></button>
            <label class="ml-auto flex items-center gap-[2px] whitespace-nowrap"><input type="checkbox" class="block appearance-none w-[13px] h-[13px] border border-[#333] bg-white">和弦</label>
            <label class="ml-[8px] flex items-center gap-[2px] whitespace-nowrap"><input type="checkbox" class="block appearance-none w-[13px] h-[13px] border border-[#333] bg-white">输入音符</label>
            <button class="ml-[6px] w-[65px] h-[22px] bg-[#e1e1e1] border border-[#adadad]">鼠标输入</button>
            <button class="ml-[4px] w-[65px] h-[22px] bg-[#e1e1e1] border border-[#adadad]">键盘输入</button>
          </div>
        </div>
      </div>
      <svg class="absolute right-[2px] bottom-[1px] w-[9px] h-[9px]"><use href="#grip" /></svg>
    </section>
  </main>

  <!-- Status bar -->
  <footer class="h-[24px] shrink-0 flex items-end justify-end bg-[#f0f0f0] border-t-2 border-[#dcdcdc]"><svg class="w-[9px] h-[9px] mb-px"><use href="#grip" /></svg></footer>

  <!-- Pointer arrow -->
  <svg class="absolute z-50 left-[420px] top-[94px] w-[230px] h-[170px] pointer-events-none" viewBox="0 0 230 170"><path d="m2 2 28 5-7 6 205 152.500-.5.5L18 19l-4 8z" fill="#ec4326" stroke="#ec4326" stroke-width=".5" /></svg>

  <script>
    // Track list
    const tracks = document.getElementById("tracks");
    for (let n = 1; n <= 3; n++) {
      const color = n === 1 ? "bg-[#cccb99]" : "bg-[#667ba5]";
      tracks.insertAdjacentHTML("beforeend", `
        <div class="h-[27px] shrink-0 flex items-center pl-[3px] pb-[2px] border border-white outline outline-[#778] -outline-offset-2 ${color}">
          <span class="w-[86px] pt-1 text-[11px]">${n}: Track ${n}</span>
          <label class="w-[66px] flex items-center gap-[2px]"><input type="checkbox" class="block appearance-none w-[13px] h-[13px] border border-[#333] bg-white">静音</label>
          <label class="flex items-center gap-[2px]"><span class="relative w-[13px] h-[13px]"><input type="checkbox" checked class="peer block appearance-none w-[13px] h-[13px] border border-[#333] bg-white"><svg class="absolute inset-0 hidden peer-checked:block w-[13px] h-[13px] text-[#333]"><use href="#check" /></svg></span>显示</label>
        </div>`);
    }

    // Effect slots
    const effects = document.getElementById("effects");
    for (let n = 1; n <= 4; n++) {
      effects.insertAdjacentHTML("beforeend", `
        <div class="h-[31px] flex items-center">
          <label for="fx${n}">效 果 器 ${n}:</label>
          <span class="relative ml-[2px]"><select id="fx${n}" disabled class="block appearance-none opacity-100 w-[146px] h-[21px] pl-[2px] bg-white bg-linear-to-r from-[#adb8cd] from-[126px] to-white to-[126px] border-2 border-white outline outline-[#ccc] -outline-offset-1 text-[#6d6d6d]"><option>0: 无效果器</option></select><svg class="absolute right-1 top-[6px] w-[10px] h-[10px] text-[#aaa]"><use href="#down" /></svg></span>
          <button type="button" disabled class="ml-[3px] w-[73px] h-[21px] bg-[#ccc] border border-[#bfbfbf] text-[#838383]">编辑</button>
        </div>`);
    }

    // Score: x positions are relative to the left edge of the track header
    const line = (x1, y1, x2, y2, c, w = 1) => `<path d="M${x1} ${y1}L${x2} ${y2}" stroke="${c}" stroke-width="${w}"/>`;
    const text = (x, y, t, attrs) => `<text x="${x}" y="${y}" ${attrs}>${t}</text>`;
    const bars = [
      { x: 116, end: 228, long: 164, bar: 238, ticks: [136, 140, 144, 148, 152, 156, 160, 184, 188, 192, 196, 216, 220, 224] },
      { x: 254, end: 382, long: 318, bar: 392, ticks: [274, 278, 282, 286, 306, 310, 314, 338, 342, 346, 350, 370, 374, 378] },
      { x: 408, end: 560, long: 496, bar: 570, ticks: [428, 432, 436, 440, 460, 464, 468, 516, 520, 524, 528, 548, 552, 556] },
      { x: 586, end: 715, long: 650, bar: 724, ticks: [606, 610, 614, 618, 638, 642, 646, 670, 674, 678, 682, 702, 706, 710] },
      { x: 740, end: 900, long: 0, bar: 0, ticks: [760, 764, 768, 772] }
    ];
    let s = `<rect width="100%" height="32" fill="#697ba5"/><rect y="32" width="100" height="100%" fill="#a5b4c3"/>`;
    s += line(0, 31.5, 2000, 31.5, "#a3b2d0") + line(100.5, 0, 100.5, 360, "#ccd3e0");
    s += `<rect x="101" y="33" width="14" height="26" fill="#50bcc0"/>`;
    s += line(0, 127.5, 2000, 127.5, "#b4c4d8") + line(0, 283.5, 2000, 283.5, "#b4c4d8");
    s += line(100.5, 18, 100.5, 28, "#fff");
    s += line(116.5, 0, 116.5, 2000, "#ffc78f", 3) + line(116.5, 0, 116.5, 2000, "#f09848") + `<path d="M117 20l6 6-6 6z" fill="#ffa040"/>`;
    bars.forEach((b, i) => {
      s += (i ? line(b.x + .5, 5, b.x + .5, 32, "#fff") : "") + line(b.x + 1, 17.5, b.end, 17.5, "#fff");
      s += text(b.x + 3, 16, i + 1, 'fill="#fff" font-size="14" font-family="Liberation Sans, sans-serif"');
      b.ticks.forEach(t => s += line(t + .5, 18, t + .5, 28, "#fff"));
      if (b.long) s += line(b.long + .5, 18, b.long + .5, 32, "#dff") + line(b.bar + .5, 18, b.bar + .5, 28, "#fff")
        + line(b.bar + .5, 102, b.bar + .5, 132, "#000") + line(b.bar + .5, 258, b.bar + .5, 288, "#000");
    });
    const digit = 'text-anchor="middle" font-weight="bold" font-size="17" font-family="Liberation Sans, sans-serif"';
    [121, 169, 259, 323, 413, 501, 591, 655, 745].forEach(x => s += text(x, 124, "0", digit));
    [[121, 0], [169, 6], [201, 5], [259, 4], [323, 3], [413, 2], [445, 4], [501, 1], [591, 1], [655, 4], [687, 5], [745, 6]].forEach(([x, n]) => {
      s += text(x, 280, n, digit);
      if (n) s += `<rect x="${x - 1}" y="262" width="3" height="2"/>`;
    });
    s += `<rect x="762" y="275" width="3" height="2"/>`;
    [[164, 207], [408, 451], [650, 693], [740, 2000]].forEach(([a, b]) => s += line(a, 283.5, b, 283.5, "#000"));
    s += `<path d="M501 258q14-12 45-12t46 12" fill="none" stroke="#333"/>`;
    s += `<path d="m84 43-5 4.500 5 4.500m8-9-5 4.500 5 4.500" fill="none" stroke="#000" stroke-width="1.200"/>`;
    [0, 156].forEach((dy, i) => {
      s += text(1, 98 + dy, '<tspan font-weight="bold">1</tspan>=C', 'font-size="17" font-family="Liberation Sans, sans-serif"');
      s += text(57, 88 + dy, "2", 'text-anchor="middle" font-size="17" font-weight="bold" font-family="Liberation Serif, serif"');
      s += text(57, 105 + dy, "4", 'text-anchor="middle" font-size="17" font-weight="bold" font-family="Liberation Serif, serif"');
      s += line(50, 91.5 + dy, 64, 91.5 + dy, "#000");
      s += text(0, 121 + dy, `${i + 4}:Track ${i + 4}`, 'font-size="12" font-family="Liberation Mono, monospace"');
    });
    document.getElementById("score").innerHTML = s;

    // Piano: five octaves and a closing C
    const piano = document.getElementById("piano");
    let p = `<rect width="517" height="103" fill="#999"/><rect x="1" y="1" width="514" height="101" fill="#222"/>`;
    const key = 100 / 7;
    for (let i = 0; i < 36; i++) {
      const x = Math.round(i * key), w = Math.round((i + 1) * key) - x - 1, oct = Math.floor(i / 7), cx = x + w / 2;
      p += `<rect x="${x + 1}" y="4" width="${w}" height="97" fill="#fff"/>`;
      p += text(cx + 1, 91, i % 7 + 1, 'text-anchor="middle" font-weight="bold" font-size="12" font-family="Liberation Sans, sans-serif"');
      const count = Math.abs(oct - 2);
      for (let d = 0; d < count; d++) {
        p += `<rect x="${Math.round(cx)}" y="${oct < 2 ? 94 + d * 3 : 78 - d * 3}" width="2" height="2" fill="#333"/>`;
      }
    }
    for (let o = 0; o < 5; o++) {
      [9, 23, 52, 66, 81].forEach(dx => {
        const x = o * 100 + dx;
        p += `<rect x="${x - 1}" y="1" width="12" height="72" fill="#999"/><rect x="${x}" y="1" width="10" height="72" fill="#000"/>`;
        p += line(x + 8.5, 14, x + 8.5, 64, "#444") + line(x + 3, 66.5, x + 8, 66.500, "#bbb");
      });
    }
    p += text(202, 83, "C", 'font-size="12" font-family="Liberation Sans, sans-serif"');
    piano.innerHTML = p;
  </script>
</body>
</html>
